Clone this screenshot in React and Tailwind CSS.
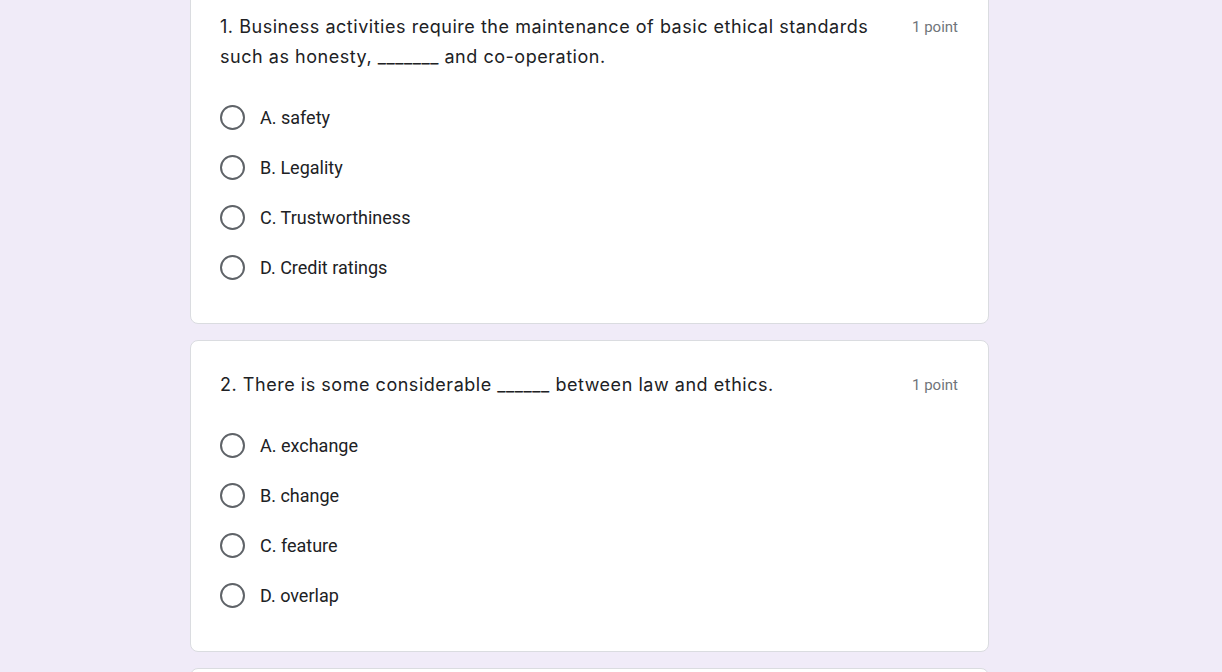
import React from "react";

const questions = [
  {
    lines: ["1. Business activities require the maintenance of basic ethical standards", "such as honesty, _______ and co-operation."],
    options: ["A. safety", "B. Legality", "C. Trustworthiness", "D. Credit ratings"],
  },
  {
    lines: ["2. There is some considerable ______ between law and ethics."],
    options: ["A. exchange", "B. change", "C. feature", "D. overlap"],
  },
];

function Radio() {
  return <span className="block w-[25px] h-[25px] rounded-full border-2 border-[#5f6368] shrink-0" />;
}

function Card({ q }) {
  return (
    <div className="bg-white border border-[#dadce0] rounded-[8px] pt-[29px] pb-[31px] px-[29px]">
      <div className="flex justify-between items-start">
        <div className="text-[18px] leading-[30px] text-[#202124] tracking-[0.53px]" style={{ fontFamily: "Inter, 'Noto Sans', sans-serif" }}>
          {q.lines.map((l, i) => (
            <div key={i}>{l}</div>
          ))}
        </div>
        <div className="text-[15px] leading-[30px] text-[#70757a] pr-[1px] shrink-0 pl-4" style={{ fontFamily: "Roboto, sans-serif" }}>
          1 point
        </div>
      </div>
      <div className="mt-[20px] flex flex-col">
        {q.options.map((o) => (
          <div key={o} className="h-[50px] flex items-center gap-[15px]">
            <Radio />
            <span className="text-[18px] text-[#202124]" style={{ fontFamily: "Roboto, sans-serif" }}>{o}</span>
          </div>
        ))}
      </div>
    </div>
  );
}

export default function App() {
  return (
    <div className="w-full h-[672px] overflow-hidden bg-[#f0ebf8]">
      <div className="ml-[190px] w-[799px] mt-[-18px] flex flex-col gap-[16px]">
        {questions.map((q, i) => (
          <Card key={i} q={q} />
        ))}
        <div className="bg-white border border-[#dadce0] rounded-[8px] h-[200px]" />
      </div>
    </div>
  );
}
